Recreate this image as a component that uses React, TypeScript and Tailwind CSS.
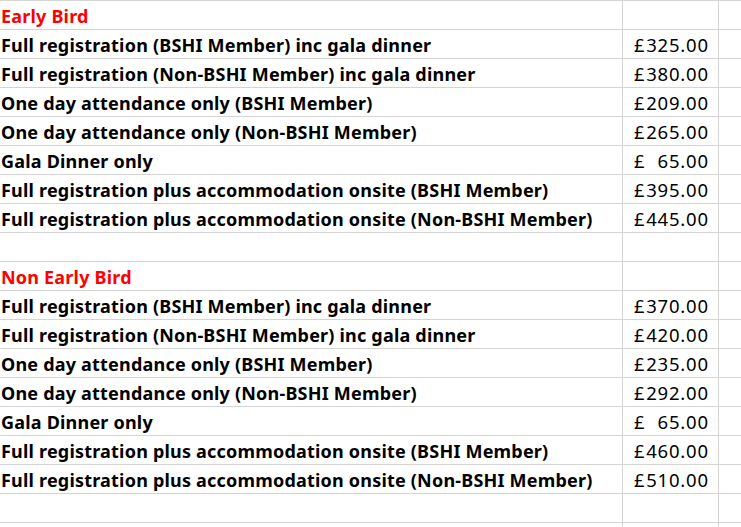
const font = { fontFamily: '"Noto Sans", "Open Sans", sans-serif' };

type Row = { label?: string; price?: string; heading?: boolean };

const items = (p: string[]): Row[] => [
  { label: "Full registration (BSHI Member) inc gala dinner", price: p[0] },
  { label: "Full registration (Non-BSHI Member) inc gala dinner", price: p[1] },
  { label: "One day attendance only (BSHI Member)", price: p[2] },
  { label: "One day attendance only (Non-BSHI Member)", price: p[3] },
  { label: "Gala Dinner only", price: p[4] },
  { label: "Full registration plus accommodation onsite (BSHI Member)", price: p[5] },
  { label: "Full registration plus accommodation onsite (Non-BSHI Member)", price: p[6] },
];

const rows: Row[] = [
  { label: "Early Bird", heading: true },
  ...items(["325.00", "380.00", "209.00", "265.00", "65.00", "395.00", "445.00"]),
  {},
  { label: "Non Early Bird", heading: true },
  ...items(["370.00", "420.00", "235.00", "292.00", "65.00", "460.00", "510.00"]),
  {},
  {},
];

export default function App() {
  return (
    <div className="w-[741px] h-[527px] overflow-hidden bg-white text-black" style={font}>
      {rows.map((r, i) => (
        <div
          key={i}
          className="grid grid-cols-[622px_96px_1fr] h-[29px] border-t border-[#d4d4d4]"
        >
          <div
            className={`flex items-end pl-px pb-[4px] text-[18px] tracking-[0.2px] leading-none font-bold whitespace-nowrap ${
              r.heading ? "text-[#ff0000]" : ""
            }`}
          >
            {r.label}
          </div>
          <div className="border-l border-[#d4d4d4] flex items-end justify-between pl-[11px] pr-[10px] pb-[4px] text-[18.5px] leading-none">
            {r.price && (
              <>
                <span>£</span>
                <span className="tracking-[0.8px] -mr-[0.8px]">{r.price}</span>
              </>
            )}
          </div>
          <div className="border-l border-[#d4d4d4]" />
        </div>
      ))}
    </div>
  );
}
